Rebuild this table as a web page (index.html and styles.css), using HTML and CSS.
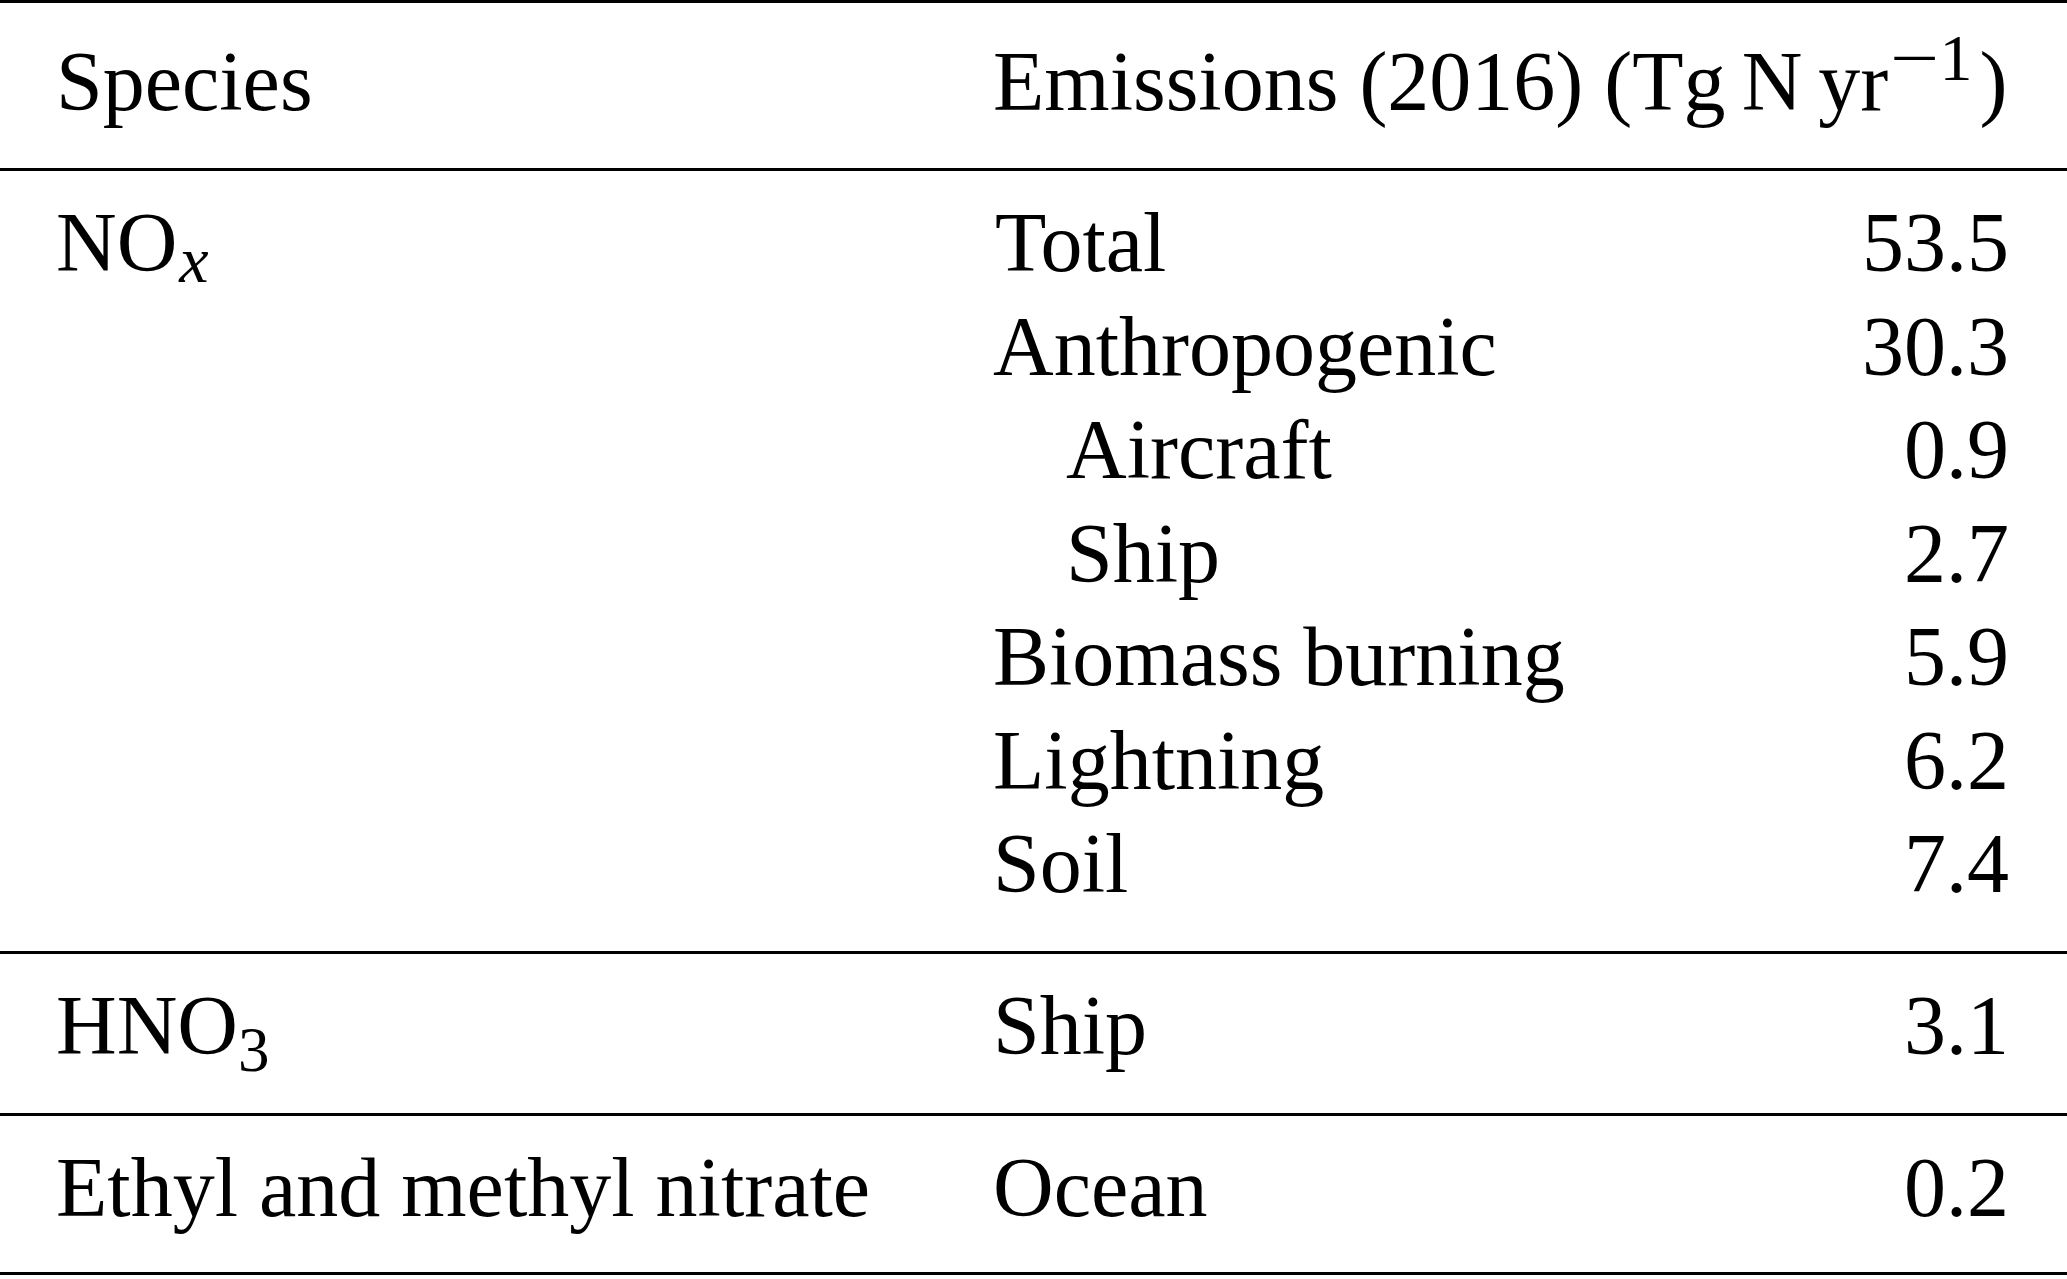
FILE: index.html
```html
<!DOCTYPE html>
<html lang="en">
<head>
<meta charset="utf-8">
<title>NOx emissions table</title>
<link rel="stylesheet" href="styles.css">
</head>
<body>
<div class="table">
  <div class="head">
    <div class="sp">Species</div>
    <div class="hdr">Emissions (2016) (Tg<span class="thin"></span>N<span class="thin"></span>yr<span class="sup"><span class="minus">−</span>1</span>)</div>
  </div>
  <div class="grp first">
    <div class="sp">NO<span class="subx">x</span></div>
    <div class="src total">Total</div><div class="val">53.5</div>
    <div class="src">Anthropogenic</div><div class="val">30.3</div>
    <div class="src indent">Aircraft</div><div class="val">0.9</div>
    <div class="src indent">Ship</div><div class="val">2.7</div>
    <div class="src">Biomass burning</div><div class="val">5.9</div>
    <div class="src">Lightning</div><div class="val">6.2</div>
    <div class="src">Soil</div><div class="val">7.4</div>
  </div>
  <div class="grp">
    <div class="sp">HNO<span class="sub3">3</span></div>
    <div class="src">Ship</div><div class="val">3.1</div>
  </div>
  <div class="grp last">
    <div class="sp">Ethyl and methyl nitrate</div>
    <div class="src">Ocean</div><div class="val">0.2</div>
  </div>
</div>
</body>
</html>
```

FILE: styles.css
```css
html, body {
  margin: 0;
  padding: 0;
  background: #ffffff;
}

body {
  width: 2067px;
  height: 1279px;
  overflow: hidden;
  font-family: "Liberation Serif", "Times New Roman", serif;
  font-size: 84px;
  line-height: 103.5px;
  color: #000000;
}

.table {
  display: flex;
  flex-direction: column;
  border-top: 3.5px solid #000;
}

.head {
  display: grid;
  grid-template-columns: 937px 1fr;
  padding: 27.4px 58px 34px 56px;
  border-bottom: 3.5px solid #000;
  white-space: nowrap;
}

.hdr {
  justify-self: start;
}

.thin {
  display: inline-block;
  width: 16px;
}

.sup {
  font-size: 66px;
  line-height: 0;
  vertical-align: 30px;
  margin-left: 2px;
  margin-right: 7px;
}

.minus {
  display: inline-block;
  transform: scaleX(1.32);
  margin: 0 6px 0 6px;
}

.grp {
  display: grid;
  grid-template-columns: 937px 1fr auto;
  padding: 20.5px 58px 35px 56px;
  border-bottom: 3.5px solid #000;
  white-space: nowrap;
}

.grp.last {
  padding-bottom: 32px;
}

.src {
  grid-column: 2;
}

.val {
  grid-column: 3;
  text-align: right;
}

.total {
  padding-left: 2px;
}

.indent {
  padding-left: 73px;
}

.subx {
  font-style: italic;
  font-size: 66px;
  line-height: 0;
  vertical-align: -11px;
  margin-left: 2px;
}

.sub3 {
  font-size: 63px;
  line-height: 0;
  vertical-align: -17px;
}
```
